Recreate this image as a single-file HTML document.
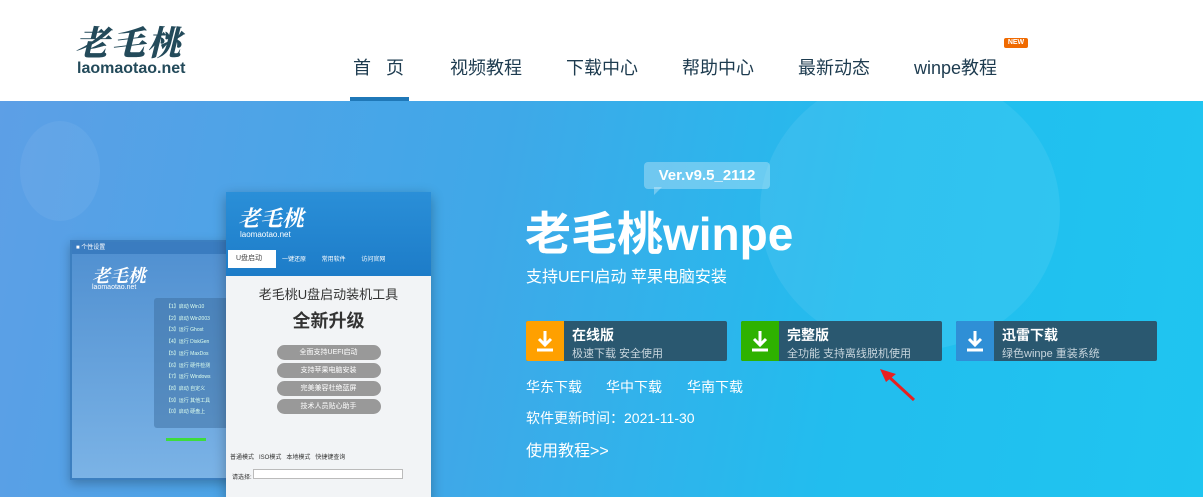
<!DOCTYPE html>
<html><head><meta charset="utf-8"><style>
*{margin:0;padding:0;box-sizing:border-box}
body{width:1203px;height:497px;overflow:hidden;font-family:"Liberation Sans","Noto Sans CJK SC",sans-serif;background:#fff;position:relative}
.hdr{position:absolute;left:0;top:0;width:1203px;height:101px;background:#fff}
.logo1{position:absolute;left:75px;top:16px;font-family:"Noto Serif CJK SC",serif;font-size:34px;font-weight:900;color:#234a5a;letter-spacing:2px;font-style:italic}
.logo2{position:absolute;left:77px;top:60px;font-size:16px;color:#234a5a;font-weight:bold}
.nav{position:absolute;top:54px;font-size:18px;color:#1d3b4f}
.ul{position:absolute;left:350px;top:97px;width:59px;height:4px;background:#1f78b8}
.new{position:absolute;left:1004px;top:38px;width:24px;height:10px;background:#f06a00;color:#fff;font-size:7px;font-weight:bold;text-align:center;line-height:10px;border-radius:2px}
.ban{position:absolute;left:0;top:101px;width:1203px;height:396px;background:linear-gradient(100deg,#5d9fe6 0%,#3fa8e8 40%,#22bdee 70%,#1fc5f0 100%);overflow:hidden}
.blob{position:absolute;border-radius:50%;background:rgba(255,255,255,.06)}
.ver{position:absolute;left:644px;top:162px;width:126px;height:27px;background:rgba(255,255,255,.3);border-radius:4px;color:#fff;font-weight:bold;font-size:15px;text-align:center;line-height:27px}
.ver:after{content:"";position:absolute;left:10px;bottom:-6px;border:4px solid transparent;border-top:4px solid rgba(255,255,255,.3);border-left:4px solid rgba(255,255,255,.3)}
.title{position:absolute;left:525px;top:198px;color:#fff;font-size:46px;font-weight:bold}
.sub{position:absolute;left:526px;top:263px;color:#fff;font-size:16px}
.btn{position:absolute;top:321px;width:201px;height:40px;background:#2a5870;border-radius:2px;color:#fff}
.btn .ic{position:absolute;left:0;top:0;width:38px;height:40px;border-radius:2px 0 0 2px}
.btn .ic svg{position:absolute;left:10px;top:9px}
.btn b{position:absolute;left:46px;top:4px;font-size:14px}
.btn span{position:absolute;left:46px;top:24px;font-size:11px;color:#c8d6de}
.lk{position:absolute;color:#fff;font-size:14px}
.win1{position:absolute;left:70px;top:139px;width:165px;height:240px;background:linear-gradient(#4f8fd0,#7bb3e6);border:2px solid #3c7fc0;box-shadow:0 4px 10px rgba(0,0,0,.25)}
.win2{position:absolute;left:226px;top:91px;width:205px;height:310px;background:#fff;box-shadow:0 4px 12px rgba(0,0,0,.3)}
.w2h{height:84px;background:linear-gradient(#2a8fd8,#1d7cc8);color:#fff}
</style></head><body>
<div class="hdr">
<div class="logo1">老毛桃</div>
<div class="logo2">laomaotao.net</div>
<div class="nav" style="left:353px">首&nbsp;&nbsp;&nbsp;页</div>
<div class="nav" style="left:450px">视频教程</div>
<div class="nav" style="left:566px">下载中心</div>
<div class="nav" style="left:682px">帮助中心</div>
<div class="nav" style="left:798px">最新动态</div>
<div class="nav" style="left:914px">winpe教程</div>
<div class="new">NEW</div>
<div class="ul"></div>
</div>
<div class="ban">
<div class="blob" style="left:20px;top:20px;width:80px;height:100px"></div>
<div class="blob" style="left:760px;top:-30px;width:300px;height:280px;background:rgba(255,255,255,.07)"></div>
<div class="win1">
<div style="height:12px;background:#3a7cc0;color:#fff;font-size:6px;padding-left:4px">■ 个性设置</div>
<div style="position:absolute;left:20px;top:20px;color:#fff;font-size:18px;font-style:italic;font-weight:bold;font-family:'Noto Serif CJK SC',serif">老毛桃</div>
<div style="position:absolute;left:20px;top:42px;color:#fff;font-size:7px">laomaotao.net</div>
<div style="position:absolute;left:82px;top:56px;width:83px;height:130px;background:rgba(60,110,160,.5);border-radius:3px;color:#dfe;font-size:5px;line-height:11.7px;padding:4px 0 0 12px">【1】启动 Win10<br>【2】启动 Win2003<br>【3】运行 Ghost<br>【4】运行 DiskGen<br>【5】运行 MaxDos<br>【6】运行 硬件检测<br>【7】运行 Windows<br>【8】启动 自定义<br>【9】运行 其他工具<br>【0】启动 硬盘上</div>
<div style="position:absolute;left:94px;top:196px;width:40px;height:3px;background:#3ddc3d"></div>
</div>
<div class="win2">
<div class="w2h"><div style="position:absolute;left:12px;top:10px;font-size:22px;font-weight:bold;font-style:italic;font-family:'Noto Serif CJK SC',serif">老毛桃</div><div style="position:absolute;left:14px;top:38px;font-size:8px">laomaotao.net</div>
<div style="position:absolute;left:2px;top:58px;width:48px;height:18px;background:#fff;color:#444;font-size:7px;line-height:18px;padding-left:8px">U盘启动</div>
<div style="position:absolute;left:56px;top:62px;font-size:6px;color:#fff;word-spacing:14px">一键还原 常用软件 访问官网</div></div>
<div style="background:#f2f4f6;height:226px;text-align:center;color:#333">
<div style="padding-top:8px;font-size:13px">老毛桃U盘启动装机工具</div>
<div style="font-size:18px;font-weight:bold;margin-top:4px">全新升级</div>
<div style="margin:12px auto 0;width:104px">
<div style="height:15px;background:#999;border-radius:8px;margin-bottom:3px;color:#fff;font-size:7px;line-height:15px">全面支持UEFI启动</div>
<div style="height:15px;background:#999;border-radius:8px;margin-bottom:3px;color:#fff;font-size:7px;line-height:15px">支持苹果电脑安装</div>
<div style="height:15px;background:#999;border-radius:8px;margin-bottom:3px;color:#fff;font-size:7px;line-height:15px">完美兼容杜绝蓝屏</div>
<div style="height:15px;background:#999;border-radius:8px;color:#fff;font-size:7px;line-height:15px">技术人员贴心助手</div></div>
<div style="margin-top:38px;text-align:left;padding-left:4px;font-size:6px;color:#333">普通模式 &nbsp; ISO模式 &nbsp; 本地模式 &nbsp; 快捷键查询</div>
<div style="text-align:left;padding:8px 0 0 6px;font-size:6px">请选择: <span style="display:inline-block;width:150px;height:10px;border:1px solid #bbb;background:#fff"></span></div>
</div>
</div>
</div>
<div class="ver">Ver.v9.5_2112</div>
<div class="title">老毛桃winpe</div>
<div class="sub">支持UEFI启动 苹果电脑安装</div>
<div class="btn" style="left:526px"><div class="ic" style="background:#ffa000"><svg width="18" height="22" viewBox="0 0 18 22"><path d="M9 1v13M3 9l6 6 6-6M1 20h16" stroke="#fff" stroke-width="3" fill="none"/></svg></div><b>在线版</b><span>极速下载 安全使用</span></div>
<div class="btn" style="left:741px"><div class="ic" style="background:#2eb200"><svg width="18" height="22" viewBox="0 0 18 22"><path d="M9 1v13M3 9l6 6 6-6M1 20h16" stroke="#fff" stroke-width="3" fill="none"/></svg></div><b>完整版</b><span>全功能 支持离线脱机使用</span></div>
<div class="btn" style="left:956px"><div class="ic" style="background:#2f8fd6"><svg width="18" height="22" viewBox="0 0 18 22"><path d="M9 1v13M3 9l6 6 6-6M1 20h16" stroke="#fff" stroke-width="3" fill="none"/></svg></div><b>迅雷下载</b><span>绿色winpe 重装系统</span></div>
<svg style="position:absolute;left:878px;top:368px" width="40" height="34"><path d="M36 32L10 8" stroke="#e82020" stroke-width="3"/><path d="M2 1L18 6 8 14z" fill="#e82020"/></svg>
<div class="lk" style="left:526px;top:377px">华东下载</div>
<div class="lk" style="left:606px;top:377px">华中下载</div>
<div class="lk" style="left:687px;top:377px">华南下载</div>
<div class="lk" style="left:526px;top:408px">软件更新时间：2021-11-30</div>
<div class="lk" style="left:526px;top:437px;font-size:16px">使用教程&gt;&gt;</div>
</body></html>
